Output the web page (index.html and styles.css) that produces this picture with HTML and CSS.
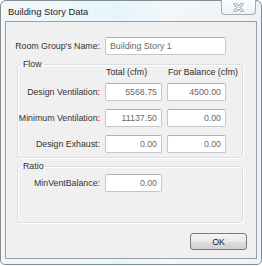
FILE: index.html
```html
<!DOCTYPE html>
<html lang="en">
<head>
  <meta charset="UTF-8">
  <title>Building Story Data</title>
  <link rel="stylesheet" href="styles.css">
</head>
<body>

<div class="window">
  <div class="titlebar">
    <span class="title">Building Story Data</span>
    <button class="close-btn" type="button">
      <svg width="11" height="9" viewBox="0 0 11 9">
        <path d="M2 1 L9 8 M9 1 L2 8" stroke="#8d949c" stroke-width="3" stroke-linecap="round"/>
        <path d="M2 1 L9 8 M9 1 L2 8" stroke="#ffffff" stroke-width="1.2" stroke-linecap="round"/>
      </svg>
    </button>
  </div>

  <div class="client">
    <!-- Nom du groupe -->
    <div class="grid name-row">
      <label class="field-label">Room Group's Name:</label>
      <input class="field wide" type="text" value="Building Story 1" readonly>
    </div>

    <!-- Groupe Flow -->
    <fieldset class="group flow">
      <legend>Flow</legend>
      <div class="grid">
        <span></span>
        <span class="col-head">Total (cfm)</span>
        <span class="col-head">For Balance (cfm)</span>

        <label class="field-label">Design Ventilation:</label>
        <input class="field num" type="text" value="5568.75" readonly>
        <input class="field num" type="text" value="4500.00" readonly>

        <label class="field-label">Minimum Ventilation:</label>
        <input class="field num" type="text" value="11137.50" readonly>
        <input class="field num" type="text" value="0.00" readonly>

        <label class="field-label">Design Exhaust:</label>
        <input class="field num" type="text" value="0.00" readonly>
        <input class="field num" type="text" value="0.00" readonly>
      </div>
    </fieldset>

    <!-- Groupe Ratio -->
    <fieldset class="group ratio">
      <legend>Ratio</legend>
      <div class="grid">
        <label class="field-label">MinVentBalance:</label>
        <input class="field num" type="text" value="0.00" readonly>
      </div>
    </fieldset>

    <div class="buttons">
      <button class="btn" type="button">OK</button>
    </div>
  </div>
</div>

</body>
</html>
```

FILE: styles.css
```css
body {
  margin: 0;
  background-color: #ffffff;
  font-family: "Liberation Sans", Arial, sans-serif;
  font-size: 8.8px;
  color: #2e2e2e;
}
.window {
  width: 260px;
  height: 263px;
  border: 1px solid #868c93;
  border-radius: 6px 6px 5px 5px;
  background: linear-gradient(90deg, #f3f6f9 0%, #eef7fa 25%, #e4f6fb 45%, #f3f7fa 65%, #eef2f6 100%);
  display: flex;
  flex-direction: column;
}
.titlebar {
  height: 20px;
  display: flex;
  align-items: flex-start;
  justify-content: space-between;
}
.title {
  margin: 5px 0 0 7px;
  font-size: 9.4px;
  color: #1e1e1e;
}
.close-btn {
  width: 35px;
  height: 15px;
  margin: -1px 5px 0 0;
  padding: 0;
  border: 1px solid #a4abb4;
  border-top: none;
  border-radius: 0 0 4px 4px;
  background: linear-gradient(#fbfcfd, #eef1f4);
  display: flex;
  align-items: center;
  justify-content: center;
}
.client {
  margin: 0 4px 5px 4px;
  flex: 1;
  border: 1px solid #9aa1a8;
  background-color: #f0f0f0;
  padding: 15px 0 0 11px;
  display: flex;
  flex-direction: column;
}
.grid {
  display: grid;
  grid-template-columns: 82px 57px 59px;
  column-gap: 5px;
  row-gap: 8px;
  align-items: center;
}
.name-row {
  margin-left: 1px;
}
.field-label {
  justify-self: end;
  white-space: nowrap;
  color: #333333;
}
.field {
  box-sizing: border-box;
  height: 18px;
  width: 100%;
  margin: 0;
  padding: 0 4px;
  border: 1px solid #c3c6ca;
  border-top-color: #aeb2b7;
  border-radius: 2px;
  background-color: #ffffff;
  font-family: inherit;
  font-size: 8.8px;
  color: #6a6a6a;
  outline: none;
}
.field.wide {
  grid-column: 2 / 4;
}
.field.num {
  text-align: right;
}
.col-head {
  white-space: nowrap;
  margin: -3px 0 -3px 1px;
  line-height: 11px;
}
.group {
  width: 224px;
  margin: 0;
  padding: 0 0 4px 0;
  border: 1px solid #d9e0e5;
  border-radius: 3px;
  box-shadow: inset 1px 1px 0 #ffffff, 1px 1px 0 #ffffff;
}
.group legend {
  margin-left: 3px;
  padding: 0 2px;
  line-height: 11px;
  color: #2e2e2e;
}
.flow {
  margin-top: 4px;
}
.ratio {
  margin-top: 3px;
  padding: 2px 0 30px 0;
}
.buttons {
  display: flex;
  justify-content: flex-end;
  margin: 10px 9px 0 0;
}
.btn {
  width: 57px;
  height: 17px;
  padding: 0;
  border: 1px solid #7a7a7a;
  border-radius: 3px;
  background: linear-gradient(#f4f4f4 0%, #ebebeb 50%, #dddddd 51%, #d0d0d0 100%);
  font-family: inherit;
  font-size: 8.8px;
  color: #222222;
}
```
